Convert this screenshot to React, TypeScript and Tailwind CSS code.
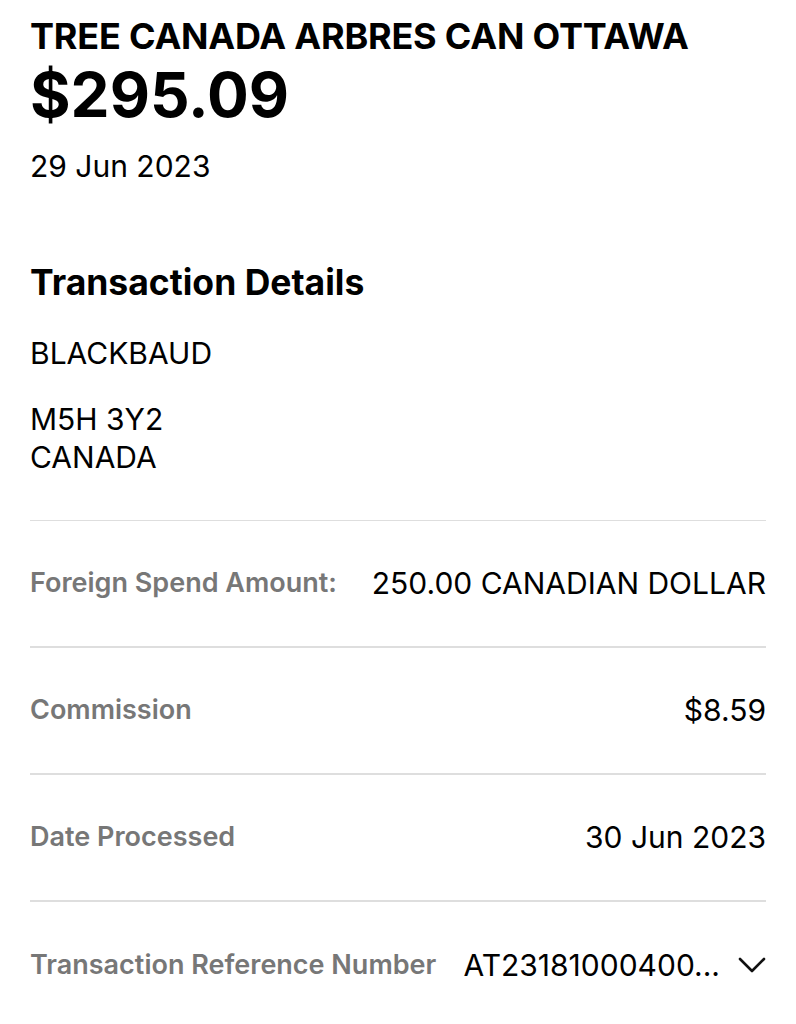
const font = { fontFamily: "Inter, 'Noto Sans', sans-serif" };

type Row = { label: string; value: string; chevron?: boolean };

const rows: Row[] = [
  { label: "Foreign Spend Amount:", value: "250.00 CANADIAN DOLLAR" },
  { label: "Commission", value: "$8.59" },
  { label: "Date Processed", value: "30 Jun 2023" },
  { label: "Transaction Reference Number", value: "AT23181000400...", chevron: true },
];

function Chevron() {
  return (
    <svg width="28" height="18" viewBox="0 0 28 18" fill="none" className="ml-[18px] shrink-0">
      <path d="M2 3 L14 15 L26 3" stroke="#111" strokeWidth="2.6" strokeLinecap="round" strokeLinejoin="round" />
    </svg>
  );
}

export default function App() {
  return (
    <div className="w-[796px] h-[1024px] bg-white overflow-hidden px-[30px] text-black" style={font}>
      <div className="pt-[14px]">
        <h1 className="text-[36px] leading-[44px] font-bold tracking-[-0.2px]">TREE CANADA ARBRES CAN OTTAWA</h1>
        <div className="mt-[2px] text-[62px] leading-[70px] font-bold">$295.09</div>
        <div className="mt-[16px] text-[30px] leading-[40px]">29 Jun 2023</div>
      </div>

      <h2 className="mt-[75px] text-[35.5px] leading-[44px] font-bold">Transaction Details</h2>
      <div className="mt-[29px] text-[30px] leading-[38px]">BLACKBAUD</div>
      <div className="mt-[28px] text-[30px] leading-[38px]">
        <div>M5H 3Y2</div>
        <div>CANADA</div>
      </div>

      <div className="mt-[44px]">
        {rows.map((r, i) => (
          <div
            key={r.label}
            className={`flex items-center justify-between h-[127px] ${i < rows.length - 1 ? "border-b" : ""} border-t border-[#dedede]`}
          >
            <span className="text-[27px] font-semibold text-[#777777] whitespace-nowrap">{r.label}</span>
            <span className="flex items-center text-[30px] whitespace-nowrap">
              {r.value}
              {r.chevron && <Chevron />}
            </span>
          </div>
        ))}
      </div>
    </div>
  );
}
